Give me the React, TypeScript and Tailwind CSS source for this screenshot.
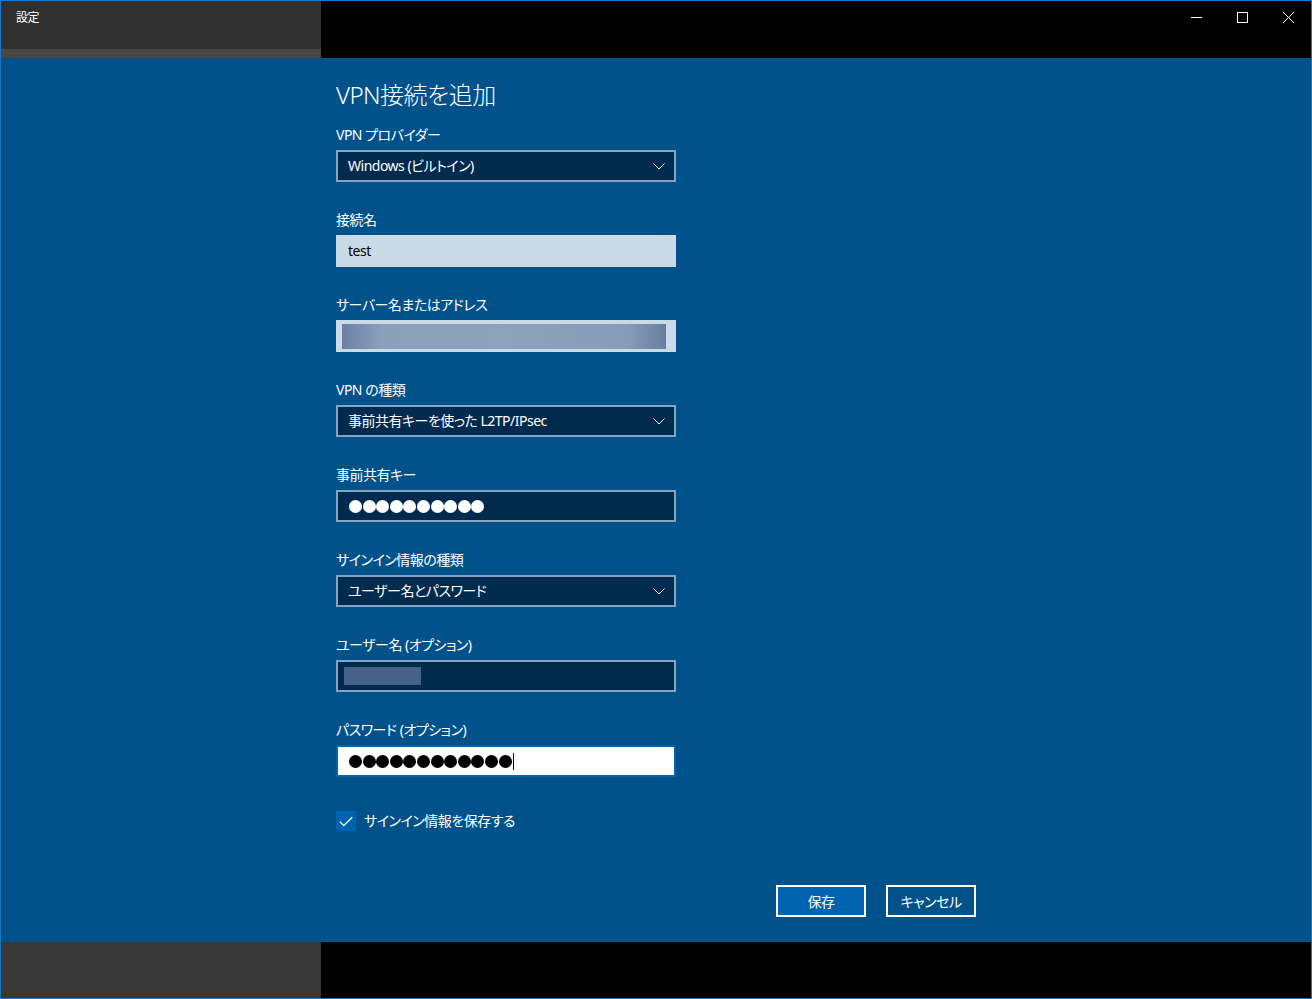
import React from 'react';

function Chevron() {
  return (
    <svg width="12" height="7" viewBox="0 0 12 7" className="text-white">
      <path d="M0.5 0.5 L6 6 L11.5 0.5" fill="none" stroke="currentColor" strokeWidth="1" />
    </svg>
  );
}

function Dots({ count, color }: { count: number; color: string }) {
  return (
    <div className="flex items-center gap-[0.6px]">
      {Array.from({ length: count }).map((_, i) => (
        <span key={i} className={`block w-[13px] h-[13px] rounded-full ${color}`} />
      ))}
    </div>
  );
}

function Field({ label, children, last }: { label: string; children: React.ReactNode; last?: boolean }) {
  return (
    <div className={last ? '' : 'mb-[28px]'}>
      <div className="h-[20px] leading-[20px] text-[14px] text-white">{label}</div>
      <div className="mt-[5px]">{children}</div>
    </div>
  );
}

function Select({ value }: { value: string }) {
  return (
    <div className="w-[340px] h-[32px] border-2 border-[#86a3c1] bg-[#012b4e] flex items-center justify-between pl-[10px] pr-[9px]">
      <span className="text-[14px] text-white leading-[20px]">{value}</span>
      <Chevron />
    </div>
  );
}

export default function App() {
  return (
    <div className="w-[1312px] h-[999px] border border-[#1a78c8] flex flex-col bg-black font-['Noto_Sans','Noto_Sans_CJK_JP',sans-serif] [font-feature-settings:'palt'] tracking-[-0.5px]">
      {/* title bar */}
      <div className="h-[57px] flex shrink-0">
        <div className="w-[320px] flex flex-col">
          <div className="h-[48px] bg-[#303030] pl-[15px] pt-[8px]">
            <div className="text-[12px] leading-[18px] text-white">設定</div>
          </div>
          <div className="h-[9px] bg-[#474747]" />
        </div>
        <div className="flex-1 flex justify-end items-start bg-black">
          <div className="w-[46px] h-[32px] flex items-center justify-center">
            <div className="w-[11px] h-[1px] bg-white" />
          </div>
          <div className="w-[46px] h-[32px] flex items-center justify-center">
            <div className="w-[11px] h-[11px] border border-white" />
          </div>
          <div className="w-[46px] h-[32px] flex items-center justify-center">
            <svg width="11" height="11" viewBox="0 0 11 11">
              <path d="M0 0 L11 11 M11 0 L0 11" stroke="white" strokeWidth="1" />
            </svg>
          </div>
        </div>
      </div>

      {/* content */}
      <div className="h-[884px] shrink-0 bg-[#01528b] pl-[335px] pt-[21px]">
        <div className="h-[32px] leading-[32px] text-[24px] font-light text-white">VPN接続を追加</div>

        <div className="mt-[14px]">
          <Field label="VPN プロバイダー">
            <Select value="Windows (ビルトイン)" />
          </Field>

          <Field label="接続名">
            <div className="w-[340px] h-[32px] bg-[#cbdae7] flex items-center pl-[12px]">
              <span className="text-[14px] text-black leading-[20px]">test</span>
            </div>
          </Field>

          <Field label="サーバー名またはアドレス">
            <div className="w-[340px] h-[32px] bg-[#cbdae7] flex items-center pl-[6px]">
              <div className="w-[324px] h-[25px] bg-[linear-gradient(90deg,#6a81a2,#8aa0bb_12%,#8da3bd_50%,#869cb8_88%,#687f9f)]" />
            </div>
          </Field>

          <Field label="VPN の種類">
            <Select value="事前共有キーを使った L2TP/IPsec" />
          </Field>

          <Field label="事前共有キー">
            <div className="w-[340px] h-[32px] border-2 border-[#86a3c1] bg-[#012b4e] flex items-center pl-[11px]">
              <Dots count={10} color="bg-white" />
            </div>
          </Field>

          <Field label="サインイン情報の種類">
            <Select value="ユーザー名とパスワード" />
          </Field>

          <Field label="ユーザー名 (オプション)">
            <div className="w-[340px] h-[32px] border-2 border-[#86a3c1] bg-[#012b4e] flex items-center pl-[6px]">
              <div className="w-[77px] h-[18px] bg-[#46628b]" />
            </div>
          </Field>

          <Field label="パスワード (オプション)" last>
            <div className="w-[340px] h-[32px] border-2 border-[#0063b1] bg-white flex items-center pl-[11px]">
              <Dots count={12} color="bg-black" />
              <div className="w-[1px] h-[17px] bg-black ml-[1px]" />
            </div>
          </Field>
        </div>

        <div className="mt-[34px] flex items-center gap-[8px]">
          <div className="w-[20px] h-[20px] bg-[#0063b1] flex items-center justify-center">
            <svg width="14" height="11" viewBox="0 0 14 11">
              <path d="M0.8 5.6 L4.8 9.6 L13.2 1.2" fill="none" stroke="white" strokeWidth="1.3" />
            </svg>
          </div>
          <span className="text-[14px] leading-[20px] text-white">サインイン情報を保存する</span>
        </div>

        <div className="mt-[54px] w-[640px] flex justify-end gap-[20px]">
          <div className="w-[90px] h-[32px] border-2 border-white bg-[#0063b1] flex items-center justify-center text-[14px] text-white">
            保存
          </div>
          <div className="w-[90px] h-[32px] border-2 border-white flex items-center justify-center text-[14px] text-white">
            キャンセル
          </div>
        </div>
      </div>

      {/* bottom */}
      <div className="flex-1 flex">
        <div className="w-[320px] bg-[#383838]" />
        <div className="flex-1 bg-black" />
      </div>
    </div>
  );
}
